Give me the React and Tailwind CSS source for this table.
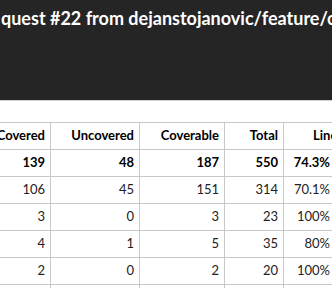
export default function App() {
  const rows = [
    ["106", "45", "151", "314", "70.1%"],
    ["3", "0", "3", "23", "100%"],
    ["4", "1", "5", "35", "80%"],
    ["2", "0", "2", "20", "100%"],
    ["5", "2", "7", "40", "71.4%"],
  ];
  const cols = "grid grid-cols-[71px_89px_85px_59px_52px_100px]";
  const cell = "border-r border-b border-[#c8c8c8] pr-[5px] flex items-center justify-end whitespace-nowrap";
  return (
    <div className="w-[332px] h-[288px] overflow-hidden bg-white" style={{ fontFamily: 'Lato, "Open Sans", sans-serif' }}>
      <div className="h-[101px] bg-[#252525] border-b border-[#cfcfcf] overflow-hidden">
        <div className="pt-[4px] pl-[1px] text-white font-bold text-[18px] leading-[28px] whitespace-nowrap">
          quest #22 from dejanstojanovic/feature/coverage
        </div>
      </div>
      <div className="h-[21px]" />
      <div className="ml-[-20px] border-t border-[#c8c8c8] text-[13px]">
        <div className={`${cols} h-[27px] font-bold text-black`}>
          <div className={cell}>Covered</div>
          <div className={cell}>Uncovered</div>
          <div className={cell}>Coverable</div>
          <div className={cell}>Total</div>
          <div className={`${cell} col-span-2 justify-start pl-[29px]`}>Line coverage</div>
        </div>
        <div className={`${cols} h-[27px] font-bold text-black`}>
          <div className={cell}>139</div>
          <div className={cell}>48</div>
          <div className={cell}>187</div>
          <div className={cell}>550</div>
          <div className={cell}>74.3%</div>
          <div className={cell}></div>
        </div>
        {rows.map((r, i) => (
          <div key={i} className={`${cols} h-[27px] text-[#222]`}>
            {r.map((v, j) => (
              <div key={j} className={cell}>{v}</div>
            ))}
            <div className={cell}></div>
          </div>
        ))}
      </div>
    </div>
  );
}
